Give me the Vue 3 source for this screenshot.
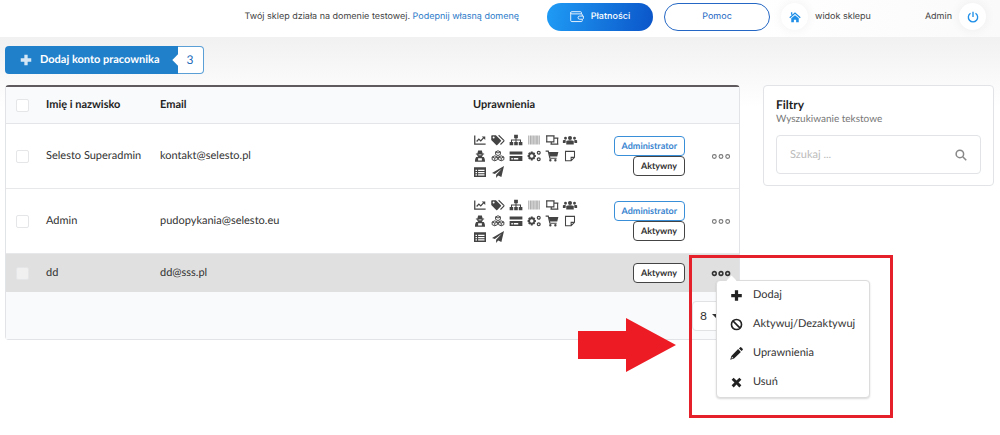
<script setup>
import { ref } from 'vue'

const chart = { s: 'M1 2v11.5h14.5M3.5 10l3-3.2 2.5 2.4 4-4.4', f: 'M10.3 3.2H15V8z', w: 1.7 }
const tags = {
  f: 'M-1 2.500v5.400l6.600 6.600a1 1 0 0 0 1.400 0l4.900-4.900a1 1 0 0 0 0-1.400L5.200 1.500H0a1 1 0 0 0-1 1zM2.200 3.400a1.300 1.300 0 1 1 0 2.600a1.300 1.300 0 0 1 0-2.600z',
  s: 'M8.800 1.700L15.800 8.400a.8 .8 0 0 1 0 1L11.300 14', w: 1.5,
}
const sitemap = { f: 'M5.500 1h5v4.500h-5zM-.5 10.500h4.800V15H-.500zM5.600 10.500h4.800V15H5.600zM11.700 10.500h4.800V15h-4.800z', s: 'M2 11V8h12v3M8 5v6', w: 1.4 }
const barcode = { s: 'M1 2v12M3.2 2v12M5.2 2v12M7 2v12M9.2 2v12M11 2v12M13 2v12M15 2v12', w: 1, tone: 'light' }
const screens = { s: 'M1 2.500h9.500v8H1zM10.500 5.500h5v8H7v-3M0 2.500h2M9.500 2.500h2M0 10.500h2M14.500 5.500h2M14.500 13.500h2M6 13.500h2', w: 1.5 }
const users = {
  f: 'M8 2.500a2.700 2.700 0 1 1 0 5.400a2.700 2.700 0 0 1 0-5.400zM3 9.200c2.500-1.300 7.500-1.300 10 0V14H3zM2 3.700a1.900 1.900 0 1 1 0 3.800a1.900 1.900 0 0 1 0-3.800zM14 3.700a1.900 1.900 0 1 1 0 3.800a1.900 1.900 0 0 1 0-3.800zM-1.500 8.500c1.500-.8 2.800-.7 4 0L2 12h-3.500zM17.500 8.500c-1.500-.8-2.800-.7-4 0L14 12h3.500z',
}
const secret = { f: 'M5.500 .5h5l1 4h2V6h-1.700c0 1.500-.7 2.700-1.500 3.200h2.700c1 .8 1.700 3 1.700 6.300H1.300c0-3.300.7-5.500 1.700-6.300h2.700C4.900 8.700 4.200 7.500 4.200 6H2.500V4.500h2zM6 6v1h4V6zM5.500 11v3h5v-3z' }
const cubes = { s: 'M8 1l3.200 1.500v3.400L8 7.400 4.800 5.900V2.500zM4.800 2.500L8 4l3.200-1.500M3.700 7.800l3.500 1.500v3.600l-3.500 1.500-3.500-1.500V9.300zM.200 9.300l3.500 1.500 3.500-1.500M3.700 11v3M12.300 7.800l3.500 1.500v3.600l-3.500 1.500-3.500-1.500V9.300zM8.800 9.300l3.500 1.500 3.500-1.500M12.300 11v3', w: 1.3 }
const card = { f: 'M-.5 2h17v4H-.500zM-.500 8h17v6.500H-.500zM1.800 10.500v2h2v-2zM5 10.500v2h6v-2z' }
const cogs = {
  f: 'M3.800 2h2.400l.4 1.700 1.400-.6 1.600 1.700-.8 1.400 1.700.6v2.400l-1.700.5.8 1.400-1.600 1.700-1.400-.7-.4 1.900H3.800l-.5-1.900-1.500.7L.200 11.100l.8-1.400L-.500 9.200V6.800l1.500-.6L.200 4.800l1.600-1.700 1.500.6zM5 5.700a2.300 2.300 0 1 0 0 4.600a2.300 2.300 0 0 0 0-4.600z',
  s: 'M14.300 1.700a1.900 1.900 0 1 1 0 3.800a1.900 1.900 0 0 1 0-3.800zM14.300 10.400a1.900 1.900 0 1 1 0 3.800a1.900 1.900 0 0 1 0-3.800z', w: 1.6,
}
const cart = { f: 'M3.500 2.500H16.500l-1.500 6.200H5zM5.800 12a1.600 1.600 0 1 1 0 3.200a1.600 1.600 0 0 1 0-3.200zM12.500 12a1.600 1.600 0 1 1 0 3.200a1.600 1.600 0 0 1 0-3.200z', s: 'M-.5 1.500h3.500l2.200 9.500h9', w: 1.6 }
const note = { s: 'M2 1.800h12v8l-4.500 4.500H2zM14 9.800H9.500v4.500', w: 1.4 }
const list = { f: 'M0 1.500h16v13H0zM2 5v1.500h2V5zM5.500 5v1.500H14V5zM2 8v1.500h2V8zM5.500 8v1.500H14V8zM2 11v1.500h2V11zM5.500 11v1.500H14V11z' }
const plane = { f: 'M16 0L0 9.200l3.800 1.600L13 3.500l-7.500 8.200V16l2.700-3.200 4.300 1.800z' }

const permissions = [chart, tags, sitemap, barcode, screens, users, secret, cubes, card, cogs, cart, note, list, plane]

const rows = ref([
  { name: 'Selesto Superadmin', email: 'kontakt@selesto.pl', admin: true },
  { name: 'Admin', email: 'pudopykania@selesto.eu', admin: true },
  { name: 'dd', email: 'dd@sss.pl', admin: false, open: true },
])

const actions = [
  { label: 'Dodaj', f: 'M6 1.500h4V6h4.500v4H10v4.500H6V10H1.500V6H6z' },
  { label: 'Aktywuj/Dezaktywuj', s: 'M8 1.800a6.200 6.200 0 1 1 0 12.400a6.200 6.200 0 0 1 0-12.400zM3.600 3.600l8.800 8.800', w: 2 },
  { label: 'Uprawnienia', f: 'M10 2.600l3.400 3.400L5 14.300l-4.700 1.400L1.700 11zM11 1.800l1.300-1.300a1.200 1.200 0 0 1 1.700 0L15.500 2a1.200 1.200 0 0 1 0 1.700L14.200 5zM2.500 12l-.7 2.200 2.200-.7z' },
  { label: 'Usuń', f: 'M4.500 2L8 5.500 11.500 2 14 4.500 10.500 8l3.500 3.500-2.500 2.500L8 10.500 4.500 14 2 11.500 5.500 8 2 4.500z' },
]
</script>

<template>
  <div class="page">
    <header class="topbar">
      <p class="notice">Twój sklep działa na domenie testowej. <a href="#">Podepnij własną domenę</a></p>
      <button class="pill pill-main" type="button">
        <svg class="wallet" viewBox="0 0 16 14" aria-hidden="true">
          <path d="M13 4V2.500a1 1 0 0 0-1-1H2a1.200 1.200 0 0 0 0 2.500h11a1 1 0 0 1 1 1v1.500M.8 2.500v9a1.300 1.300 0 0 0 1.200 1.300h11a1 1 0 0 0 1-1v-1.600M15.300 6.500H11a1.800 1.800 0 0 0 0 3.600h3.500l.8-.8z" />
        </svg>
        Płatności
      </button>
      <button class="pill" type="button">Pomoc</button>
      <a class="shop" href="#">
        <span class="round">
          <svg viewBox="0 0 16 16" aria-hidden="true">
            <path class="solid" d="M8 5.500l5 4.300V15H9.500v-3.500h-3V15H3V9.800z" />
            <path class="line" d="M1 9l7-6.200L15 9M3.500 5V1.500" />
          </svg>
        </span>
        widok sklepu
      </a>
      <div class="account">
        Admin
        <button class="round" type="button" aria-label="Wyloguj">
          <svg viewBox="0 0 16 16" aria-hidden="true"><path class="line" d="M4.700 3A6.200 6.200 0 1 0 11.300 3M8 1v7" /></svg>
        </button>
      </div>
    </header>

    <div class="body">
      <div class="toolbar">
        <button class="add" type="button">
          <span class="add-main">
            <svg viewBox="0 0 16 16" aria-hidden="true"><path d="M5.800 1h4.400v4.800H15v4.400h-4.800V15H5.800v-4.800H1V5.800h4.800z" /></svg>
            Dodaj konto pracownika
          </span>
          <span class="add-count">3</span>
        </button>
      </div>

      <main class="columns">
        <div class="list">
          <table>
            <colgroup>
              <col class="c-check" /><col class="c-name" /><col /><col class="c-perm" /><col class="c-tags" /><col class="c-menu" />
            </colgroup>
            <thead>
              <tr>
                <th><input type="checkbox" aria-label="Zaznacz wszystko" /></th>
                <th>Imię i nazwisko</th>
                <th>Email</th>
                <th>Uprawnienia</th>
                <th></th>
                <th></th>
              </tr>
            </thead>
            <tbody>
              <tr v-for="row in rows" :key="row.email" :class="{ active: row.open, tall: row.admin }">
                <td><input type="checkbox" :aria-label="row.name" /></td>
                <td>{{ row.name }}</td>
                <td>{{ row.email }}</td>
                <td>
                  <div v-if="row.admin" class="perms">
                    <svg v-for="(icon, i) in permissions" :key="i" viewBox="0 0 16 16" :class="icon.tone" aria-hidden="true">
                      <path v-if="icon.f" class="solid" :d="icon.f" />
                      <path v-if="icon.s" class="line" :d="icon.s" :stroke-width="icon.w" />
                    </svg>
                  </div>
                </td>
                <td>
                  <div class="tags">
                    <span v-if="row.admin" class="tag tag-blue">Administrator</span>
                    <span class="tag">Aktywny</span>
                  </div>
                </td>
                <td>
                  <div class="more-wrap">
                    <button class="more" type="button" aria-label="Opcje">
                      <svg viewBox="0 0 18 6" aria-hidden="true">
                        <circle cx="3" cy="3" r="1.700" /><circle cx="9" cy="3" r="1.700" /><circle cx="15" cy="3" r="1.700" />
                      </svg>
                    </button>
                    <template v-if="row.open">
                      <div class="menu">
                        <button v-for="a in actions" :key="a.label" type="button">
                          <svg viewBox="0 0 16 16" aria-hidden="true">
                            <path v-if="a.f" class="solid" :d="a.f" />
                            <path v-if="a.s" class="line" :d="a.s" :stroke-width="a.w" />
                          </svg>
                          {{ a.label }}
                        </button>
                      </div>
                      <div class="frame"></div>
                      <svg class="arrow" viewBox="0 0 98 54" aria-hidden="true"><path d="M0 13h48V0l50 27-50 27V41H0z" /></svg>
                    </template>
                  </div>
                </td>
              </tr>
            </tbody>
            <tfoot>
              <tr>
                <td colspan="6">
                  <span class="size">
                    <select aria-label="Liczba wierszy"><option>8</option></select>
                  </span>
                </td>
              </tr>
            </tfoot>
          </table>
        </div>

        <aside class="filters">
          <h2>Filtry</h2>
          <label for="search">Wyszukiwanie tekstowe</label>
          <div class="search">
            <input id="search" type="text" placeholder="Szukaj ..." />
            <svg viewBox="0 0 16 16" aria-hidden="true"><path d="M6.500 1.500a5 5 0 1 1 0 10a5 5 0 0 1 0-10zM10.300 10.300l4.700 4.700" /></svg>
          </div>
        </aside>
      </main>
    </div>
  </div>
</template>

<style>
body {
  background: #fff;
}
</style>

<style scoped>
* {
  box-sizing: border-box;
}
.page {
  min-height: 100vh;
  overflow: hidden;
  font: 11px/16px Lato, "Liberation Sans", sans-serif;
  text-rendering: geometricPrecision;
  color: #333;
}
button {
  font: inherit;
  color: inherit;
  text-rendering: inherit;
  border: 0;
  background: none;
  padding: 0;
  cursor: pointer;
}
a {
  text-decoration: none;
  color: inherit;
}
.solid {
  fill: currentColor;
  fill-rule: evenodd;
}
.line {
  fill: none;
  stroke: currentColor;
}
.topbar {
  display: flex;
  align-items: center;
  justify-content: flex-end;
  height: 37px;
  padding: 0 14px 4px 0;
  background: linear-gradient(90deg, #fff 76%, #fafafa);
  font: 9px/14px Inter, "Open Sans", sans-serif;
  color: #444;
}
.notice {
  margin: 0 28px 0 0;
}
.notice a {
  color: #2b7bc9;
}
.pill {
  display: flex;
  align-items: center;
  justify-content: center;
  gap: 7px;
  width: 106px;
  height: 28px;
  margin-right: 11px;
  border: 1px solid #2467c4;
  border-radius: 14px;
  background: #fff;
  color: #2467c4;
}
.pill-main {
  border: 0;
  background: linear-gradient(100deg, #1f9cf5, #0b55c9);
  color: #fff;
  font-weight: 500;
}
.wallet {
  width: 14px;
  height: 13px;
  fill: none;
  stroke: #fff;
}
.shop,
.account {
  display: flex;
  align-items: center;
  gap: 7px;
}
.account {
  margin-left: 54px;
}
.round {
  display: grid;
  place-items: center;
  width: 27px;
  height: 27px;
  border-radius: 50%;
  background: #fff;
  box-shadow: 0 0 12px rgba(0, 0, 0, 0.06);
  color: #1f8fe8;
}
.round svg {
  width: 12px;
  height: 12px;
}
.round .line {
  stroke-width: 1.8;
}
.body {
  padding: 9px 6px 0 5px;
  background: linear-gradient(#f1f1f1, #fff 70px);
}
.toolbar {
  margin-bottom: 11px;
}
.add {
  display: inline-flex;
  height: 28px;
  vertical-align: top;
}
.add-main {
  display: flex;
  align-items: center;
  gap: 8px;
  height: 28px;
  padding: 0 18px 0 15px;
  border-radius: 4px 0 0 4px;
  background: #2180ca;
  color: #fff;
  font-weight: 700;
}
.add-main svg {
  width: 12px;
  height: 12px;
  fill: #d5e7f6;
}
.add-count {
  position: relative;
  display: grid;
  place-items: center;
  width: 26px;
  height: 28px;
  border: 1px solid #5a9fd6;
  border-left: 0;
  border-radius: 0 4px 4px 0;
  background: #fff;
  color: #2168b8;
  font-size: 12px;
}
.add-count::before {
  content: "";
  position: absolute;
  left: -4px;
  top: 9px;
  width: 8px;
  height: 8px;
  background: #fff;
  transform: rotate(45deg);
}
.columns {
  display: grid;
  grid-template-columns: minmax(0, 735fr) minmax(0, 231fr);
  align-items: start;
  gap: 23px;
}
table {
  width: 100%;
  table-layout: fixed;
  border-collapse: separate;
  border-spacing: 0;
  border: 1px solid #e1e3e6;
  border-top: 2px solid #5e5a5e;
  border-radius: 4px;
  background: #fff;
}
.c-check {
  width: 30px;
}
.c-name {
  width: 114px;
}
.c-perm {
  width: 136px;
}
.c-tags {
  width: 97px;
}
.c-menu {
  width: 43px;
}
th,
td {
  padding: 0 0 0 10px;
  text-align: left;
  vertical-align: middle;
}
th {
  height: 37px;
  border-bottom: 1px solid #e3e5e8;
  background: #f9fafb;
  color: #1f1f1f;
  font-weight: 700;
}
tbody td {
  height: 38px;
}
.tall td {
  height: 65px;
  border-bottom: 1px solid #e6e8ea;
}
.active td {
  background: #e0e0e0;
}
input[type="checkbox"] {
  appearance: none;
  display: block;
  width: 13px;
  height: 13px;
  margin: 0;
  border: 1px solid #e4e6e8;
  border-radius: 2px;
  background: #fff;
}
.active input[type="checkbox"] {
  background: #f0f0f0;
}
.perms {
  display: grid;
  grid-template-columns: repeat(6, 18px);
  grid-auto-rows: 16px;
  align-items: center;
}
.perms svg {
  width: 12px;
  height: 12px;
  margin-left: 1px;
  overflow: visible;
  color: #444;
}
.perms .light {
  color: #888;
}
.tags {
  display: flex;
  flex-direction: column;
  align-items: flex-end;
  padding-right: 11px;
}
.tag {
  height: 20px;
  padding: 0 7px;
  border: 1px solid #444;
  border-radius: 4px;
  background: #fff;
  font-size: 9px;
  line-height: 18px;
  font-weight: 700;
}
.tag-blue {
  border-color: #3a8fd9;
  color: #3a85d0;
}
.more-wrap {
  position: relative;
}
.more {
  display: block;
  margin-left: 5px;
}
.more svg {
  display: block;
  width: 20px;
  height: 7px;
  fill: none;
  stroke: #777;
}
.active .more svg {
  stroke: #333;
  stroke-width: 1.4;
}
.menu {
  position: absolute;
  z-index: 2;
  left: 10px;
  top: 10px;
  width: 154px;
  border: 1px solid #dcdcdc;
  border-radius: 4px;
  background: #fff;
  box-shadow: 0 1px 2px rgba(0, 0, 0, 0.15);
}
.menu::before {
  content: "";
  position: absolute;
  left: 11px;
  top: -4px;
  width: 7px;
  height: 7px;
  background: #fff;
  transform: rotate(45deg);
}
.menu button {
  display: flex;
  align-items: center;
  gap: 10px;
  width: 100%;
  height: 29px;
  padding-left: 13px;
}
.menu svg {
  width: 13px;
  height: 13px;
  color: #222;
}
.frame {
  position: absolute;
  z-index: 3;
  left: -17px;
  top: -15px;
  width: 204px;
  height: 163px;
  border: 3px solid #e5202a;
  pointer-events: none;
}
.arrow {
  position: absolute;
  z-index: 3;
  left: -128px;
  top: 48px;
  width: 98px;
  height: 54px;
  fill: #ed1c24;
}
tfoot td {
  height: 47px;
  padding: 0 10px;
  background: #f9fafb;
  text-align: right;
}
.size {
  position: relative;
  display: inline-block;
  vertical-align: top;
}
.size::after {
  content: "";
  position: absolute;
  right: 9px;
  top: 13px;
  border: 4px solid transparent;
  border-top-color: #333;
  border-bottom: 0;
}
select {
  appearance: none;
  display: block;
  width: 37px;
  height: 30px;
  padding: 0 0 0 7px;
  border: 1px solid #e0e2e4;
  border-radius: 4px;
  background: #fff;
  color: #333;
  font: inherit;
  font-size: 12px;
}
.filters {
  padding: 12px 12px 11px;
  border: 1px solid #e1e3e6;
  border-radius: 4px;
  background: #fff;
}
h2 {
  margin: 0;
  color: #1f1f1f;
  font-size: 12px;
  line-height: 14px;
  font-weight: 700;
}
.filters label {
  display: block;
  font-size: 10px;
  line-height: 14px;
  color: #777;
}
.search {
  display: flex;
  align-items: center;
  height: 39px;
  margin-top: 9px;
  padding: 0 13px;
  border: 1px solid #e1e3e6;
  border-radius: 4px;
}
.search input {
  flex: 1;
  min-width: 0;
  padding: 0;
  border: 0;
  outline: 0;
  background: none;
  font: inherit;
  text-rendering: inherit;
}
.search input::placeholder {
  color: #bbb;
}
.search svg {
  width: 12px;
  height: 12px;
  fill: none;
  stroke: #888;
  stroke-width: 2;
}
</style>
